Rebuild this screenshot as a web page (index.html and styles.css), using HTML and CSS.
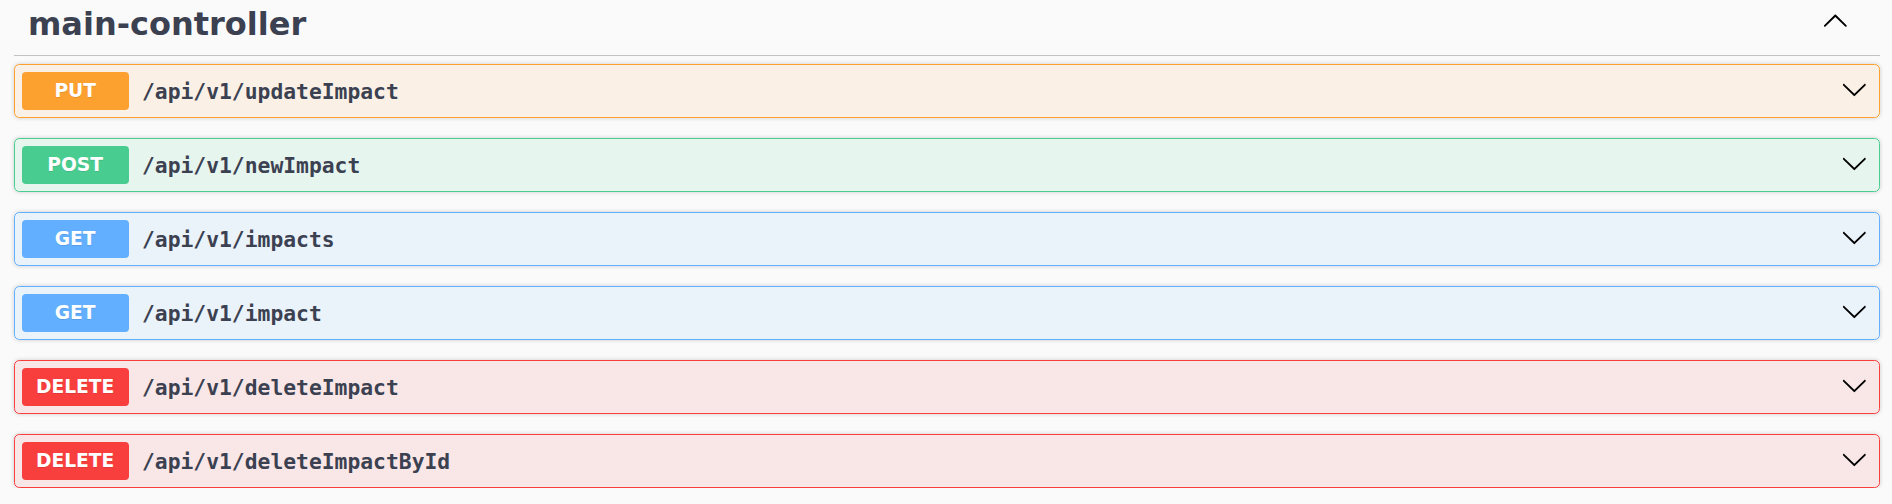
FILE: index.html
```html
<!DOCTYPE html>
<html lang="en">
<head>
<meta charset="utf-8">
<title>main-controller</title>
<link rel="stylesheet" href="styles.css">
</head>
<body>
<div class="section">
  <h3 class="tag">
    <span class="tag-name">main-controller</span>
    <button class="tag-toggle" aria-label="Collapse">
      <svg class="arrow up" viewBox="0 0 20 20" width="26.67" height="26.67"><path d="M17.418 6.109c.272-.268.709-.268.979 0s.271.701 0 .969l-7.908 7.83c-.27.268-.707.268-.979 0l-7.908-7.830c-.27-.268-.27-.701 0-.969.271-.268.709-.268.979 0L10 13.25l7.418-7.141z"/></svg>
    </button>
  </h3>
  <div class="ops">
    <div class="op op-put">
      <span class="method">PUT</span>
      <span class="path">/api/v1/updateImpact</span>
      <svg class="arrow" viewBox="0 0 20 20" width="26.67" height="26.67"><path d="M17.418 6.109c.272-.268.709-.268.979 0s.271.701 0 .969l-7.908 7.83c-.27.268-.707.268-.979 0l-7.908-7.83c-.27-.268-.27-.701 0-.969.271-.268.709-.268.979 0L10 13.25l7.418-7.141z"/></svg>
    </div>
    <div class="op op-post">
      <span class="method">POST</span>
      <span class="path">/api/v1/newImpact</span>
      <svg class="arrow" viewBox="0 0 20 20" width="26.67" height="26.67"><path d="M17.418 6.109c.272-.268.709-.268.979 0s.271.701 0 .969l-7.908 7.83c-.27.268-.707.268-.979 0l-7.908-7.83c-.27-.268-.27-.701 0-.969.271-.268.709-.268.979 0L10 13.25l7.418-7.141z"/></svg>
    </div>
    <div class="op op-get">
      <span class="method">GET</span>
      <span class="path">/api/v1/impacts</span>
      <svg class="arrow" viewBox="0 0 20 20" width="26.67" height="26.67"><path d="M17.418 6.109c.272-.268.709-.268.979 0s.271.701 0 .969l-7.908 7.83c-.27.268-.707.268-.979 0l-7.908-7.83c-.27-.268-.27-.701 0-.969.271-.268.709-.268.979 0L10 13.25l7.418-7.141z"/></svg>
    </div>
    <div class="op op-get">
      <span class="method">GET</span>
      <span class="path">/api/v1/impact</span>
      <svg class="arrow" viewBox="0 0 20 20" width="26.67" height="26.67"><path d="M17.418 6.109c.272-.268.709-.268.979 0s.271.701 0 .969l-7.908 7.83c-.27.268-.707.268-.979 0l-7.908-7.83c-.27-.268-.27-.701 0-.969.271-.268.709-.268.979 0L10 13.25l7.418-7.141z"/></svg>
    </div>
    <div class="op op-delete">
      <span class="method">DELETE</span>
      <span class="path">/api/v1/deleteImpact</span>
      <svg class="arrow" viewBox="0 0 20 20" width="26.67" height="26.67"><path d="M17.418 6.109c.272-.268.709-.268.979 0s.271.701 0 .969l-7.908 7.83c-.27.268-.707.268-.979 0l-7.908-7.83c-.27-.268-.27-.701 0-.969.271-.268.709-.268.979 0L10 13.25l7.418-7.141z"/></svg>
    </div>
    <div class="op op-delete">
      <span class="method">DELETE</span>
      <span class="path">/api/v1/deleteImpactById</span>
      <svg class="arrow" viewBox="0 0 20 20" width="26.67" height="26.67"><path d="M17.418 6.109c.272-.268.709-.268.979 0s.271.701 0 .969l-7.908 7.83c-.27.268-.707.268-.979 0l-7.908-7.83c-.27-.268-.27-.701 0-.969.271-.268.709-.268.979 0L10 13.25l7.418-7.141z"/></svg>
    </div>
  </div>
</div>
</body>
</html>
```
FILE: styles.css
```css
html, body {
  margin: 0;
  padding: 0;
  background: #fafafa;
}
body {
  font-family: "DejaVu Sans", sans-serif;
  color: #3b4151;
}
.section {
  margin: 0 12px 0 14px;
}
.tag {
  display: flex;
  align-items: center;
  margin: 0 0 8px;
  padding: 5px 0 12px 14px;
  border-bottom: 1px solid rgba(59, 65, 81, 0.3);
  font-size: 32px;
  line-height: 38px;
  font-weight: 700;
}
.tag-name {
  flex: 1;
}
.tag-toggle {
  border: 0;
  background: none;
  padding: 0;
  margin: 0 31px 6px 0;
  display: flex;
  cursor: pointer;
}
.arrow {
  display: block;
  flex: none;
  fill: #000;
}
.arrow.up {
  transform: rotate(180deg);
}
.ops {
  display: flex;
  flex-direction: column;
  gap: 20px;
}
.op {
  display: flex;
  align-items: center;
  box-sizing: border-box;
  height: 54px;
  padding: 0 11px 0 6.67px;
  border: 1px solid;
  border-radius: 5.33px;
  box-shadow: 0 0 4px rgba(0, 0, 0, 0.19);
}
.op .arrow {
  margin-bottom: 4px;
}
.method {
  flex: none;
  min-width: 107px;
  height: 38.67px;
  line-height: 38.67px;
  border-radius: 4px;
  font-size: 18.67px;
  font-weight: 700;
  text-align: center;
  color: #fff;
  text-shadow: 0 1px 0 rgba(0, 0, 0, 0.1);
  font-family: "DejaVu Sans", sans-serif;
}
.path {
  flex: 1;
  padding: 0 13.33px;
  font-family: "DejaVu Sans Mono", monospace;
  font-size: 21.33px;
  font-weight: 700;
  color: #3b4151;
}
.op-put { background: rgba(252, 161, 48, 0.1); border-color: #fca130; }
.op-put .method { background: #fca130; }
.op-post { background: rgba(73, 204, 144, 0.1); border-color: #49cc90; }
.op-post .method { background: #49cc90; }
.op-get { background: rgba(97, 175, 254, 0.1); border-color: #61affe; }
.op-get .method { background: #61affe; }
.op-delete { background: rgba(249, 62, 62, 0.1); border-color: #f93e3e; }
.op-delete .method { background: #f93e3e; }
```
